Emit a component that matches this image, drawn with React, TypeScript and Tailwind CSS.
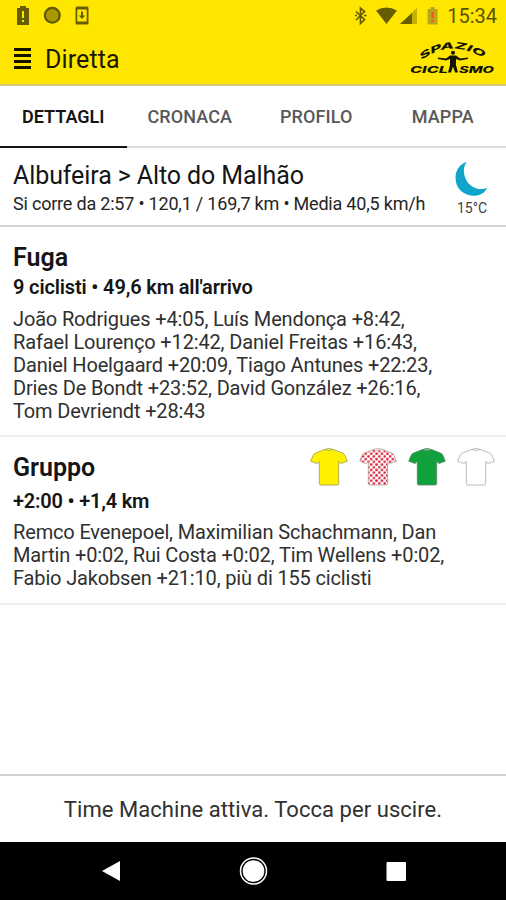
import React from "react";

type JerseyProps = { fill: string; stroke: string; dotted?: boolean };

function Jersey({ fill, stroke, dotted }: JerseyProps) {
  const shape =
    "M14.500 2.500Q19 4.500 23.500 2.500L32.500 6Q34.500 7 35 8.500L37.300 14.200L31 16.500L28.700 14.500V36.500Q28.700 38 27 38H11Q9.300 38 9.300 36.500V14.500L7 16.500L.7 14.200L3 8.500Q3.500 7 5.500 6Z";
  return (
    <svg width="38" height="40" viewBox="0 0 38 40">
      {dotted && (
        <defs>
          <pattern id="dots" width="5.400" height="5.400" patternUnits="userSpaceOnUse">
            <rect width="5.400" height="5.400" fill="#fff" />
            <circle cx="1.350" cy="1.350" r="1.350" fill="#e0283c" />
            <circle cx="4.050" cy="4.050" r="1.350" fill="#e0283c" />
          </pattern>
        </defs>
      )}
      <path d={shape} fill={dotted ? "url(#dots)" : fill} stroke={stroke} strokeWidth="0.8" strokeLinejoin="round" />
      <path d="M14.500 2.500Q19 0.500 23.500 2.500" fill={dotted ? "#fff" : fill} stroke={stroke} strokeWidth="0.8" />
    </svg>
  );
}

function StatusBar() {
  return (
    <div className="flex h-8 items-center justify-between pl-4 pr-[9px]">
      <svg width="76" height="20" viewBox="0 0 76 20" className="-mt-px">
        <path d="M4 0h6v2h3v17H1V2h3z" fill="#665c00" />
        <path d="M6 5h2v7H6zM6 14h2v2H6z" fill="#ffe600" />
        <circle cx="36.300" cy="9.300" r="7.400" fill="#a89800" stroke="#5f5600" strokeWidth="2.200" />
        <path d="M61 .500h10q1.500 0 1.500 1.500v15q0 1.500-1.500 1.500H61q-1.500 0-1.500-1.500V2Q59.500 .500 61 .500z" fill="#665c00" />
        <path d="M61.300 3.500h9.400v12h-9.400z" fill="#ffe600" />
        <path d="M65 5.500h2v4h2.200L66 13l-3.200-3.500H65z" fill="#665c00" />
      </svg>
      <div className="flex items-center">
        <svg width="88" height="20" viewBox="0 0 88 20" className="mr-[4px] -mt-px">
          <path d="M1 5.500L9.500 13.500 5.500 17.500V2l4 3.500L1 14" fill="none" stroke="#665c00" strokeWidth="1.700" />
          <path d="M9 9.600h2.500M0 9.600h2" stroke="#665c00" strokeWidth="1.500" />
          <path d="M21 4.500Q31.500-1.500 42 4.500L31.500 18z" fill="#665c00" />
          <path d="M62 2v16H45z" fill="#c4b000" />
          <path d="M57 7v11H45z" fill="#665c00" />
          <path d="M75.500 1h4v2h3v15.500h-10V3h3z" fill="#b9a61c" />
          <path d="M76.500 6h2v6h-2zM76.500 14h2v2h-2z" fill="#f4511e" />
        </svg>
        <span className="text-[20px] leading-8 text-[#5c5300]">15:34</span>
      </div>
    </div>
  );
}

function Logo() {
  return (
    <svg width="86" height="36" viewBox="0 0 86 36" fill="#141200" fontFamily="Inter, sans-serif" fontWeight="800" fontStyle="italic">
      <defs>
        <path id="arch" d="M12.500 20Q43 -2 76 19" />
      </defs>
      <text fontSize="9">
        <textPath href="#arch" textLength="66" lengthAdjust="spacingAndGlyphs">SPAZIO</textPath>
      </text>
      <text x="1" y="32.500" fontSize="9" textLength="38" lengthAdjust="spacingAndGlyphs">CICL</text>
      <text x="50" y="32.500" fontSize="9" textLength="35" lengthAdjust="spacingAndGlyphs">SMO</text>
      <circle cx="44" cy="12.800" r="2" />
      <path d="M29 17.500l8 1 4-3h6l4 3 8-1v1.500l-8 1.500-4-1.500v6l2 7.500h-3l-2-6-2 6h-3l2-7.500v-6l-4 1.500-8-1.500z" />
    </svg>
  );
}

const tabs = ["DETTAGLI", "CRONACA", "PROFILO", "MAPPA"];

const breakaway = [
  "João Rodrigues +4:05, Luís Mendonça +8:42,",
  "Rafael Lourenço +12:42, Daniel Freitas +16:43,",
  "Daniel Hoelgaard +20:09, Tiago Antunes +22:23,",
  "Dries De Bondt +23:52, David González +26:16,",
  "Tom Devriendt +28:43",
];

const peloton = [
  "Remco Evenepoel, Maximilian Schachmann, Dan",
  "Martin +0:02, Rui Costa +0:02, Tim Wellens +0:02,",
  "Fabio Jakobsen +21:10, più di 155 ciclisti",
];

function Riders({ lines }: { lines: string[] }) {
  return (
    <div className="whitespace-nowrap text-[20px] leading-[23px] tracking-[-0.15px] text-[#303030]">
      {lines.map((line) => (
        <div key={line}>{line}</div>
      ))}
    </div>
  );
}

export default function App() {
  return (
    <div className="flex h-[900px] w-[506px] flex-col overflow-hidden bg-white font-['Roboto',sans-serif] text-[#151515]">
      <header className="h-[86px] shrink-0 border-b-2 border-[#d5cc80] bg-[#ffe600]">
        <StatusBar />
        <div className="flex h-[52px] items-center pl-[14px] pr-[11px]">
          <div className="flex w-[17px] flex-col gap-[3px]">
            <span className="h-[3px] bg-[#151300]" />
            <span className="h-[3px] bg-[#151300]" />
            <span className="h-[3px] bg-[#151300]" />
            <span className="h-[3px] bg-[#151300]" />
          </div>
          <h1 className="ml-[14px] mt-[3px] flex-1 text-[25px] leading-8 tracking-[0.1px] text-[#1c1900]">Diretta</h1>
          <Logo />
        </div>
      </header>

      <nav className="grid h-[62px] shrink-0 grid-cols-4">
        {tabs.map((tab, i) => (
          <div
            key={tab}
            className={
              i === 0
                ? "h-[62px] border-b-2 border-[#151515] text-center text-[18px] font-semibold leading-[61px] text-[#151515]"
                : "h-[62px] border-b-2 border-[#dcdcdc] text-center text-[18px] font-medium leading-[61px] tracking-[0.1px] text-[#585858]"
            }
          >
            {tab}
          </div>
        ))}
      </nav>

      <section className="flex h-[79px] shrink-0 justify-between border-b-2 border-[#d2d2d2] pl-[13px] pr-[16px]">
        <div className="whitespace-nowrap pt-[13px]">
          <h2 className="text-[25px] leading-[29px] tracking-[-0.1px]">Albufeira &gt; Alto do Malhão</h2>
          <p className="text-[18px] leading-[28px] tracking-[-0.2px] text-[#252525]">Si corre da 2:57 • 120,1 / 169,7 km • Media 40,5 km/h</p>
        </div>
        <div className="flex w-[36px] flex-col items-center pt-[12px]">
          <svg width="34" height="37" viewBox="0 0 34 37">
            <path d="M11.500 1.800C-1.500 6.500-2.500 23 6 31C14.500 38.500 28 37 32.300 28C24 31 15.500 27.500 11.500 20.500C8 14 8 7.500 11.500 1.800Z" fill="#12a5ca" />
          </svg>
          <span className="text-[14px] leading-[22px] text-[#404040]">15°C</span>
        </div>
      </section>

      <section className="h-[210px] shrink-0 border-b-2 border-[#ededed] pl-[13px] pt-[15px]">
        <h2 className="text-[25px] font-semibold leading-[31px]">Fuga</h2>
        <h3 className="mb-[7px] text-[20px] font-semibold leading-[28px] tracking-[-0.15px]">9 ciclisti • 49,6 km all'arrivo</h3>
        <Riders lines={breakaway} />
      </section>

      <section className="h-[168px] shrink-0 border-b-2 border-[#ededed] pl-[13px] pr-[11px] pt-[10px]">
        <div className="flex h-[40px] items-start justify-between">
          <h2 className="pt-[5px] text-[25px] font-semibold leading-[32px]">Gruppo</h2>
          <div className="flex gap-[11px]">
            <Jersey fill="#fff000" stroke="#a09a50" />
            <Jersey fill="#fff" stroke="#b59a9a" dotted />
            <Jersey fill="#10a13c" stroke="#608568" />
            <Jersey fill="#fff" stroke="#aaa" />
          </div>
        </div>
        <h3 className="mb-[6px] text-[20px] font-semibold leading-[28px] tracking-[-0.2px]">+2:00 • +1,4 km</h3>
        <Riders lines={peloton} />
      </section>

      <div className="flex-1" />

      <footer className="flex h-[68px] shrink-0 items-center justify-center border-t-2 border-[#d2d2d2] text-[22px] tracking-[0.050px] text-[#303030]">
        Time Machine attiva. Tocca per uscire.
      </footer>

      <div className="h-[58px] shrink-0 bg-black">
        <svg width="506" height="58" viewBox="0 0 506 58" fill="#fff">
          <path d="M120 19V39L102 29Z" />
          <circle cx="253.500" cy="29" r="10.800" />
          <circle cx="253.500" cy="29" r="13" fill="none" stroke="#fff" strokeWidth="1.500" />
          <rect x="386.500" y="20" width="19.500" height="19" rx="1" />
        </svg>
      </div>
    </div>
  );
}
